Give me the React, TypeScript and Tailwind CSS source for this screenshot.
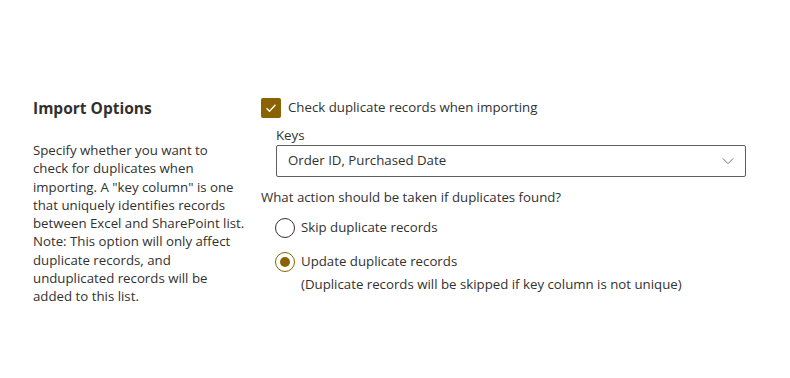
import React from "react";

export default function App() {
  return (
    <div
      className="w-[790px] h-[378px] bg-white text-[#323130] overflow-hidden"
      style={{ fontFamily: '"Segoe UI", "Open Sans", sans-serif' }}
    >
      <div className="flex pt-[96px] pl-[33px]">
        <div className="w-[228px] shrink-0">
          <h2 className="text-[15.5px] font-bold leading-[22px] mt-[1px]">Import Options</h2>
          <p className="mt-[22px] w-[212px] text-[13.25px] leading-[18.3px]">
            Specify whether you want to check for duplicates when importing. A "key column" is one that uniquely identifies records between Excel and SharePoint list. Note: This option will only affect duplicate records, and unduplicated records will be added to this list.
          </p>
        </div>
        <div className="w-[485px] shrink-0">
          <label className="flex items-center h-[22px] mt-[1px]">
            <span className="w-[20px] h-[20px] rounded-[2px] bg-[#8a6300] flex items-center justify-center">
              <svg width="12" height="12" viewBox="0 0 12 12" fill="none">
                <path d="M1.5 6.3 L4.5 9.2 L10.5 2.8" stroke="white" strokeWidth="1.3" />
              </svg>
            </span>
            <span className="ml-[7px] text-[13.25px]">Check duplicate records when importing</span>
          </label>
          <div className="pl-[15px]">
            <div className="mt-[6px] text-[13.25px] leading-[20px]">Keys</div>
            <div className="h-[32px] w-[470px] border border-[#605e5c] rounded-[2px] flex items-center justify-between pl-[11px] pr-[10px]">
              <span className="text-[13.25px]">Order ID, Purchased Date</span>
              <svg width="14" height="14" viewBox="0 0 16 16" fill="none">
                <path d="M2 5 L8 11 L14 5" stroke="#605e5c" strokeWidth="1" />
              </svg>
            </div>
          </div>
          <div className="mt-[10px] text-[13.25px] leading-[20px]">What action should be taken if duplicates found?</div>
          <div className="pl-[14px]">
            <label className="flex items-center mt-[11px] h-[20px]">
              <span className="w-[20px] h-[20px] rounded-full border border-[#323130]" />
              <span className="ml-[6px] text-[13.25px]">Skip duplicate records</span>
            </label>
            <label className="flex items-center mt-[14px] h-[20px]">
              <span className="w-[20px] h-[20px] rounded-full border border-[#8a6300] flex items-center justify-center">
                <span className="w-[10px] h-[10px] rounded-full bg-[#8a6300]" />
              </span>
              <span className="ml-[6px] text-[13.25px]">Update duplicate records</span>
            </label>
            <div className="pl-[26px] mt-[2px] text-[13.25px] leading-[20px]">
              (Duplicate records will be skipped if key column is not unique)
            </div>
          </div>
        </div>
      </div>
    </div>
  );
}
